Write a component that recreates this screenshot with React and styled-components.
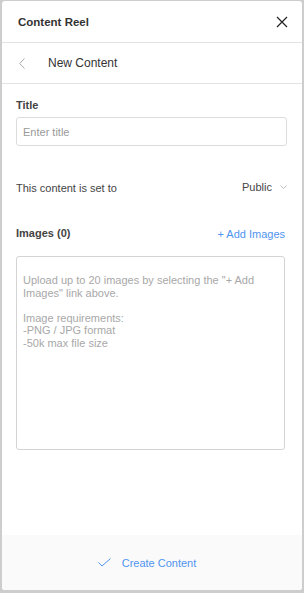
import React from 'react';
import styled, { createGlobalStyle } from 'styled-components';

const blue = '#4f95ef';

const GlobalStyle = createGlobalStyle`
  html, body {
    margin: 0;
    padding: 0;
    background: #cdcdcd;
    font-family: 'Liberation Sans', Arial, sans-serif;
  }
`;

const Frame = styled.div`
  width: 304px;
  height: 593px;
  box-sizing: border-box;
  padding: 1px 2px 3px 2px;
`;

const Panel = styled.div`
  height: 100%;
  background: #fff;
  border-radius: 3px;
  display: flex;
  flex-direction: column;
  overflow: hidden;
`;

const Header = styled.div`
  height: 41px;
  display: flex;
  align-items: center;
  justify-content: space-between;
  padding: 0 14px 0 16px;
  border-bottom: 1px solid #e3e3e3;
`;

const HeaderTitle = styled.div`
  font-size: 11.5px;
  font-weight: bold;
  color: #333;
  padding-top: 1px;
`;

const CloseButton = styled.button`
  border: 0;
  background: none;
  padding: 0;
  width: 12px;
  height: 12px;
  display: flex;
  cursor: pointer;
`;

const SubHeader = styled.div`
  height: 40px;
  display: flex;
  align-items: center;
  padding: 0 0 0 17px;
  border-bottom: 1px solid #e3e3e3;
`;

const BackButton = styled.button`
  border: 0;
  background: none;
  padding: 0;
  width: 6px;
  height: 11px;
  display: flex;
  margin-right: 23px;
`;

const SubTitle = styled.div`
  font-size: 12px;
  color: #333;
`;

const Body = styled.div`
  flex: 1;
  padding: 15px 17px 0 14px;
  display: flex;
  flex-direction: column;
`;

const Label = styled.div`
  font-size: 11px;
  font-weight: bold;
  color: #444;
  line-height: 13px;
`;

const Input = styled.input`
  margin-top: 5px;
  width: 271px;
  height: 29px;
  box-sizing: border-box;
  border: 1px solid #dcdcdc;
  border-radius: 3px;
  padding: 0 6px;
  font-family: inherit;
  font-size: 11px;
  color: #333;
  outline: none;
  &::placeholder { color: #999; }
`;

const Row = styled.div`
  display: flex;
  align-items: center;
  justify-content: space-between;
  margin-top: ${p => p.gap}px;
  height: 13px;
`;

const RowText = styled.div`
  font-size: 11px;
  color: #444;
`;

const Select = styled.div`
  display: flex;
  align-items: center;
  gap: 8px;
  font-size: 11px;
  color: #444;
  margin-top: -2px;
  margin-right: -2px;
`;

const AddLink = styled.a`
  font-size: 11px;
  color: ${blue};
  text-decoration: none;
  cursor: pointer;
`;

const DropBox = styled.div`
  margin-top: 16px;
  width: 269px;
  height: 194px;
  box-sizing: border-box;
  border: 1px solid #d4d4d4;
  border-radius: 3px;
  padding: 17px 6px;
  font-size: 11px;
  line-height: 12.6px;
  color: #a8a8a8;
`;

const Para = styled.p`
  margin: 0 0 12.6px;
`;

const Footer = styled.div`
  height: 55px;
  background: #fafafa;
  display: flex;
  align-items: center;
  justify-content: center;
  padding-right: 10px;
`;

const FooterButton = styled.button`
  border: 0;
  background: none;
  padding: 0;
  display: flex;
  align-items: center;
  gap: 11px;
  font-family: inherit;
  font-size: 11px;
  color: ${blue};
  cursor: pointer;
`;

const App = () => (
  <Frame>
    <GlobalStyle />
    <Panel>
      <Header>
        <HeaderTitle>Content Reel</HeaderTitle>
        <CloseButton>
          <svg width="12" height="12" viewBox="0 0 12 12">
            <path d="M1 1 L11 11 M11 1 L1 11" stroke="#222" strokeWidth="1.2" fill="none" />
          </svg>
        </CloseButton>
      </Header>
      <SubHeader>
        <BackButton>
          <svg width="6" height="11" viewBox="0 0 6 11">
            <path d="M5.5 0.5 L0.7 5.5 L5.5 10.5" stroke="#aaa" strokeWidth="1" fill="none" />
          </svg>
        </BackButton>
        <SubTitle>New Content</SubTitle>
      </SubHeader>
      <Body>
        <Label>Title</Label>
        <Input placeholder="Enter title" />
        <Row gap={35}>
          <RowText>This content is set to</RowText>
          <Select>
            Public
            <svg width="7" height="4" viewBox="0 0 7 4">
              <path d="M0.5 0.5 L3.5 3.5 L6.5 0.5" stroke="#bbb" strokeWidth="1" fill="none" />
            </svg>
          </Select>
        </Row>
        <Row gap={33}>
          <Label>Images (0)</Label>
          <AddLink>+ Add Images</AddLink>
        </Row>
        <DropBox>
          <Para>Upload up to 20 images by selecting the "+ Add Images" link above.</Para>
          <div>Image requirements:</div>
          <div>-PNG / JPG format</div>
          <div>-50k max file size</div>
        </DropBox>
      </Body>
      <Footer>
        <FooterButton>
          <svg width="13" height="9" viewBox="0 0 13 9">
            <path d="M0.5 4.5 L4 8 L12.5 0.5" stroke={blue} strokeWidth="1" fill="none" />
          </svg>
          Create Content
        </FooterButton>
      </Footer>
    </Panel>
  </Frame>
);

export default App;
